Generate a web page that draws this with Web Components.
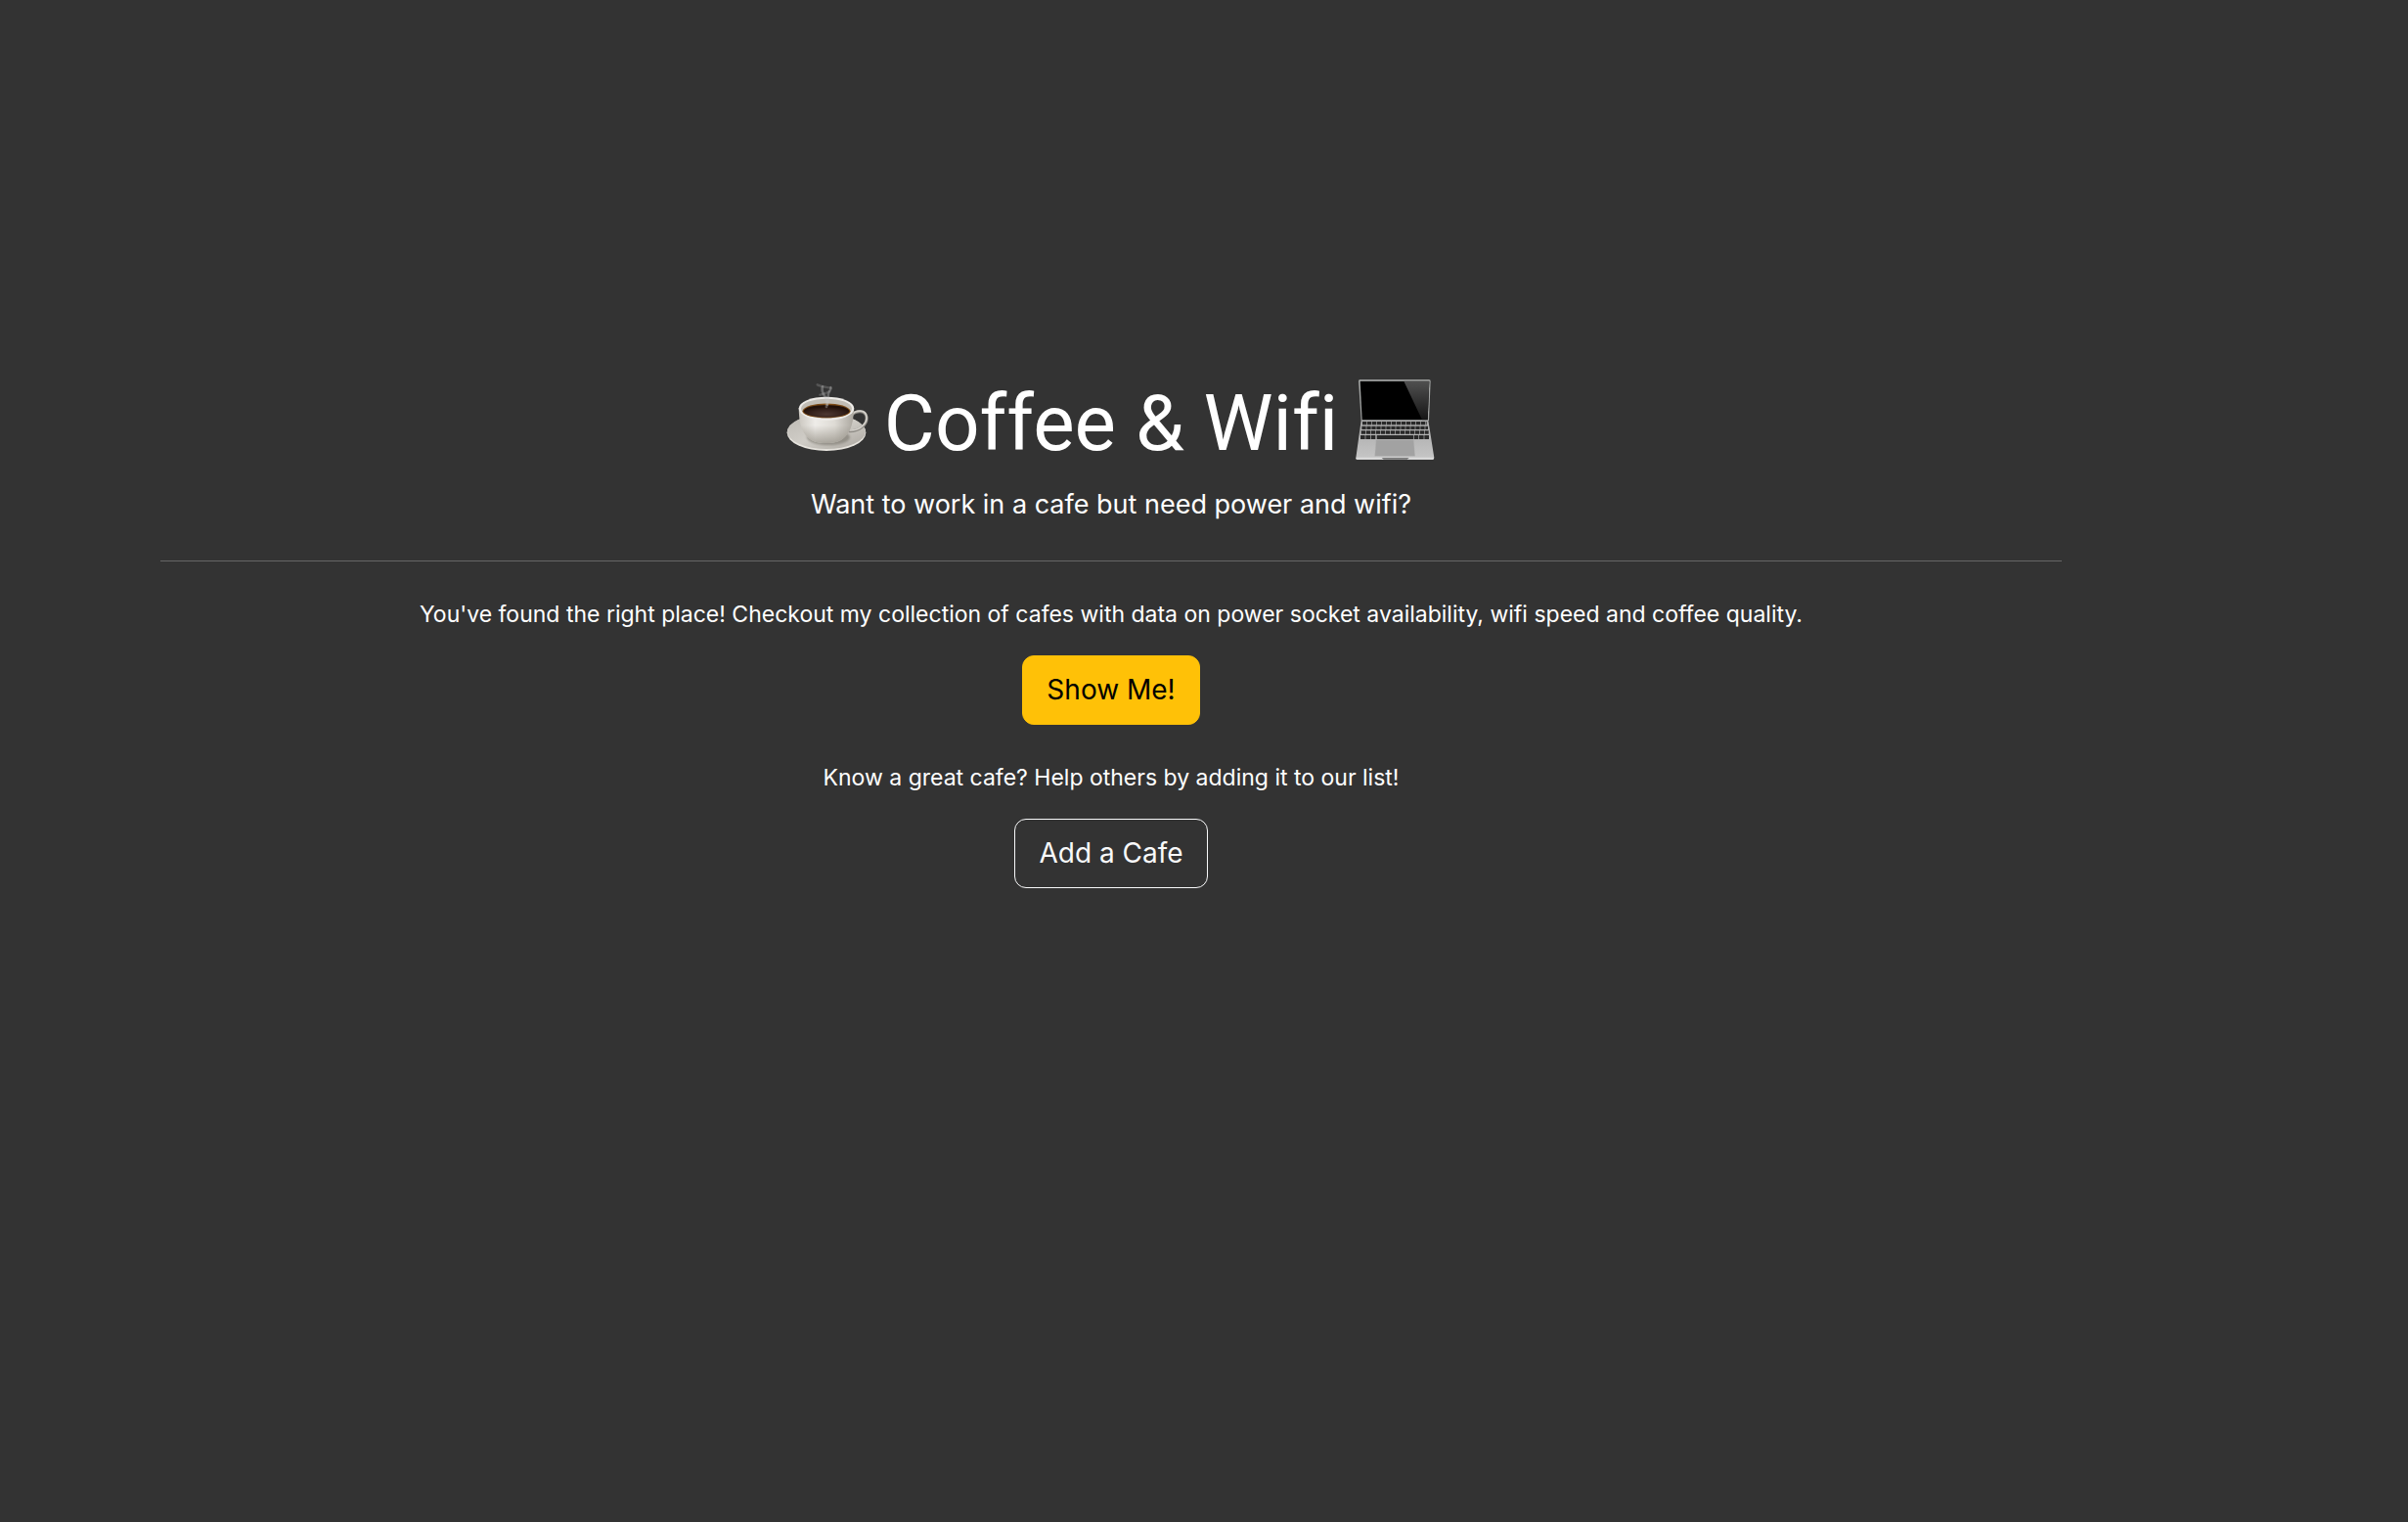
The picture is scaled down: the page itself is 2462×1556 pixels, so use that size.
<!DOCTYPE html>
<html lang="en">
<head>
  <meta charset="utf-8">
  <meta name="viewport" content="width=device-width, initial-scale=1">
  <title>Coffee and Wifi</title>
  <style>
    body {
      margin: 0;
      background: #333333;
      color: #ffffff;
      font-family: Inter, "Liberation Sans", sans-serif;
      font-size: 23px;
      line-height: 36px;
    }
  </style>
</head>
<body>
  <cafe-hero>
    <hero-title slot="title">
      <coffee-icon slot="before"></coffee-icon>
      Coffee &amp; Wifi
      <laptop-icon slot="after"></laptop-icon>
    </hero-title>
    <span slot="lead">Want to work in a cafe but need power and wifi?</span>
    <cafe-action href="#cafes" label="Show Me!" variant="warning">You've found the right place! Checkout my collection of cafes with data on power socket availability, wifi speed and coffee quality.</cafe-action>
    <cafe-action href="#add" label="Add a Cafe" variant="outline">Know a great cafe? Help others by adding it to our list!</cafe-action>
  </cafe-hero>

  <script>
    class CoffeeIcon extends HTMLElement {
      connectedCallback() {
        this.attachShadow({ mode: "open" });
        this.shadowRoot.innerHTML = `
          <style>
            :host { display: block; flex: none; width: 84px; height: 84px; }
            svg { display: block; width: 100%; height: 100%; }
          </style>
          <svg viewBox="45 54 252 252" aria-hidden="true">
            <defs>
              <linearGradient id="plate" x1="0" y1="0" x2="1" y2="1">
                <stop offset="0" stop-color="#bdbab4"/>
                <stop offset=".5" stop-color="#d0cdc7"/>
                <stop offset="1" stop-color="#aaa69f"/>
              </linearGradient>
              <linearGradient id="cup" x1="0" y1="0" x2="1" y2="0">
                <stop offset="0" stop-color="#cbc7c0"/>
                <stop offset=".3" stop-color="#eeece8"/>
                <stop offset=".65" stop-color="#dedbd5"/>
                <stop offset="1" stop-color="#aaa69e"/>
              </linearGradient>
              <linearGradient id="shade" x1="0" y1="0" x2="0" y2="1">
                <stop offset=".5" stop-color="#8f8a80" stop-opacity="0"/>
                <stop offset="1" stop-color="#8f8a80" stop-opacity=".7"/>
              </linearGradient>
              <radialGradient id="coffee" cx=".5" cy=".75" r=".6">
                <stop offset="0" stop-color="#4d3831"/>
                <stop offset=".65" stop-color="#33201a"/>
                <stop offset="1" stop-color="#211008"/>
              </radialGradient>
              <filter id="soft" x="-20%" y="-20%" width="140%" height="140%"><feGaussianBlur stdDeviation="3"/></filter>
              <filter id="steam" x="-30%" y="-30%" width="160%" height="160%"><feGaussianBlur stdDeviation="2"/></filter>
            </defs>
            <ellipse cx="168" cy="217" rx="121" ry="56" fill="#e6e3dd"/>
            <ellipse cx="168" cy="214" rx="120" ry="53" fill="url(#plate)"/>
            <ellipse cx="174" cy="231" rx="66" ry="24" fill="#77736b" opacity=".6" filter="url(#soft)"/>
            <path d="M245 164c14-16 43-16 46 5 3 23-23 45-55 43" fill="none" stroke="#8f8c86" stroke-width="9"/>
            <path d="M246 160c14-14 42-14 45 7 3 23-23 44-53 43" fill="none" stroke="#d3d0ca" stroke-width="5"/>
            <path d="M83 140c1 44 7 70 26 90 14 14 32 19 58 19s45-5 58-19c19-20 26-46 27-90z" fill="url(#cup)"/>
            <path d="M83 140c1 44 7 70 26 90 14 14 32 19 58 19s45-5 58-19c19-20 26-46 27-90z" fill="url(#shade)"/>
            <ellipse cx="168" cy="143" rx="85" ry="36" fill="#eeece8"/>
            <ellipse cx="168" cy="143" rx="78" ry="30" fill="#c1bdb5"/>
            <path d="M94 152c4-33 144-33 148 0-8 26-140 26-148 0z" fill="#7c4b16"/>
            <ellipse cx="168" cy="151" rx="70" ry="19" fill="url(#coffee)"/>
            <g fill="none" stroke="#cccccc" stroke-linecap="round" filter="url(#steam)">
              <path d="M168 138c3-12 1-20-4-30-8-12-12-22-8-32" stroke-width="8" opacity=".35"/>
              <path d="M171 132c5-14 0-24 3-34 4-10 9-14 7-20" stroke-width="7" opacity=".35"/>
              <path d="M148 101c12-3 22-5 28-11M140 70c10 5 22 6 42 10" stroke-width="7" opacity=".22"/>
            </g>
          </svg>
        `;
      }
    }

    class LaptopIcon extends HTMLElement {
      connectedCallback() {
        this.attachShadow({ mode: "open" });
        this.shadowRoot.innerHTML = `
          <style>
            :host { display: block; flex: none; width: 84px; height: 84px; }
            svg { display: block; width: 100%; height: 100%; }
          </style>
          <svg viewBox="39 54 252 252" aria-hidden="true">
            <defs>
              <linearGradient id="base" x1="0" y1="0" x2="0" y2="1">
                <stop offset="0" stop-color="#a8a8a8"/>
                <stop offset="1" stop-color="#c6c6c6"/>
              </linearGradient>
              <linearGradient id="glare" x1="0" y1="0" x2="0" y2="1">
                <stop offset="0" stop-color="#505050"/>
                <stop offset="1" stop-color="#151515"/>
              </linearGradient>
            </defs>
            <path d="M58 54h212q5 0 5 5l-5 121H62L54 59q0-5 4-5z" fill="#a2a4a3"/>
            <path d="M59 59h212l-5 119H65z" fill="#000000"/>
            <path d="M193 59h78l-5 119h-17z" fill="url(#glare)"/>
            <path d="M62 179h206l18 115q0 5-5 5H50q-5 0-4-5z" fill="url(#base)"/>
            <path d="M47 293h238v3q0 3-4 3H50q-4 0-4-3z" fill="#dddddd"/>
            <path d="M125 294h84l-6 5h-72z" fill="#777777"/>
            <path d="M108 239h115l4 50H104z" fill="#a2a2a2" stroke="#b4b4b4" stroke-width="1"/>
            <g fill="none" stroke="#292929">
              <path d="M66 188h197" stroke-width="10" stroke-dasharray="13 2"/>
              <path d="M64 202h203" stroke-width="10" stroke-dasharray="13 2"/>
              <path d="M62 216h207" stroke-width="10" stroke-dasharray="13 2"/>
              <path d="M60 231h49M224 231h47" stroke-width="12" stroke-dasharray="14 2"/>
              <path d="M111 231h111" stroke-width="12"/>
            </g>
          </svg>
        `;
      }
    }

    class HeroTitle extends HTMLElement {
      connectedCallback() {
        this.attachShadow({ mode: "open" });
        this.shadowRoot.innerHTML = `
          <style>
            :host { display: block; }
            h1 {
              display: flex;
              align-items: flex-start;
              justify-content: center;
              gap: 16px;
              margin: 0 0 12px;
              font-family: Roboto, Inter, sans-serif;
              font-size: 80px;
              font-weight: 400;
              font-variant-ligatures: none;
              line-height: 98px;
            }
            ::slotted(*) { margin-top: 4px; }
          </style>
          <h1>
            <slot name="before"></slot>
            <span><slot></slot></span>
            <slot name="after"></slot>
          </h1>
        `;
      }
    }

    class CafeAction extends HTMLElement {
      connectedCallback() {
        this.attachShadow({ mode: "open" });
        this.shadowRoot.innerHTML = `
          <style>
            :host { display: block; }
            p { margin: 0 0 24px; }
            a {
              display: inline-block;
              padding: 12px 24px;
              border: 1px solid #f8f9fa;
              border-radius: 12px;
              color: #f8f9fa;
              font-size: 28px;
              line-height: 45px;
              text-decoration: none;
              vertical-align: top;
            }
            a.warning {
              border-color: #ffc107;
              background: #ffc107;
              color: #000000;
            }
          </style>
          <p><slot></slot></p>
          <a></a>
        `;

        const link = this.shadowRoot.querySelector("a");
        link.className = this.getAttribute("variant");
        link.href = this.getAttribute("href");
        link.textContent = this.getAttribute("label");
      }
    }

    class CafeHero extends HTMLElement {
      connectedCallback() {
        this.attachShadow({ mode: "open" });
        this.shadowRoot.innerHTML = `
          <style>
            :host {
              display: block;
              padding: 384px 354px 0 164px;
              text-align: center;
            }
            .lead {
              margin: 0;
              font-size: 27px;
              line-height: 43px;
            }
            hr {
              margin: 36px 0;
              border: 0;
              border-top: 1px solid #666666;
            }
            .actions {
              display: grid;
              gap: 36px;
            }
          </style>
          <slot name="title"></slot>
          <p class="lead"><slot name="lead"></slot></p>
          <hr>
          <div class="actions"><slot></slot></div>
        `;
      }
    }

    customElements.define("coffee-icon", CoffeeIcon);
    customElements.define("laptop-icon", LaptopIcon);
    customElements.define("hero-title", HeroTitle);
    customElements.define("cafe-action", CafeAction);
    customElements.define("cafe-hero", CafeHero);
  </script>
</body>
</html>
